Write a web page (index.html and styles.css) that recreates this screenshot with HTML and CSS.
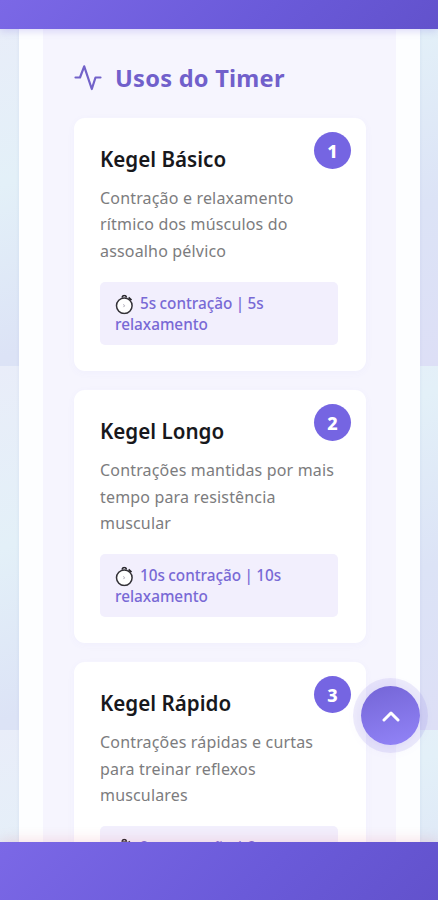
FILE: index.html
```html
<!DOCTYPE html>
<html lang="pt-BR">
<head>
<meta charset="utf-8">
<meta name="viewport" content="width=device-width, initial-scale=1">
<title>Usos do Timer</title>
<link rel="stylesheet" href="styles.css">
</head>
<body>
<svg class="defs" width="0" height="0" aria-hidden="true">
  <symbol id="stopwatch" viewBox="0 0 18 20">
    <circle cx="9.3" cy="11.2" r="7.8" fill="#fff" stroke="#343238" stroke-width="1.5"/>
    <path d="M7.2 3.2Q7.4 1 9.3 1t2.1 2.2M13.6 3l2.9 2.6" fill="none" stroke="#29272d" stroke-width="1.7"/>
    <path d="M8.5 9.8l1 1.6-1 1.2" fill="none" stroke="#a9a6b4" stroke-width="1"/>
  </symbol>
</svg>
<header class="bar bar-top"></header>
<main class="page">
  <div class="sheet">
    <section class="panel">
      <h2 class="title">
        <svg class="pulse" viewBox="0 0 28 28" aria-hidden="true"><path d="M1.5 13.5H6L10.2 2.3l7.6 22.7L21.5 13.5h5"/></svg>
        <span>Usos do Timer</span>
      </h2>
      <div class="cards">
        <article class="card">
          <span class="badge">1</span>
          <h3>Kegel Básico</h3>
          <p class="desc">Contração e relaxamento<br>rítmico dos músculos do<br>assoalho pélvico</p>
          <p class="time"><svg class="watch" aria-hidden="true"><use href="#stopwatch"/></svg>5s contração | 5s<br>relaxamento</p>
        </article>
        <article class="card">
          <span class="badge">2</span>
          <h3>Kegel Longo</h3>
          <p class="desc">Contrações mantidas por mais<br>tempo para resistência<br>muscular</p>
          <p class="time"><svg class="watch" aria-hidden="true"><use href="#stopwatch"/></svg>10s contração | 10s<br>relaxamento</p>
        </article>
        <article class="card">
          <span class="badge">3</span>
          <h3>Kegel Rápido</h3>
          <p class="desc">Contrações rápidas e curtas<br>para treinar reflexos<br>musculares</p>
          <p class="time"><svg class="watch" aria-hidden="true"><use href="#stopwatch"/></svg>2s contração | 2s<br>relaxamento</p>
        </article>
      </div>
    </section>
  </div>
</main>
<footer class="bar bar-bottom"></footer>
<button class="to-top" aria-label="Voltar ao topo">
  <svg viewBox="0 0 18 12" aria-hidden="true"><path d="M2 10l7-7 7 7"/></svg>
</button>
</body>
</html>
```
FILE: styles.css
```css
* { box-sizing: border-box; }

body {
  margin: 0;
  height: 900px;
  overflow: hidden;
  display: flex;
  flex-direction: column;
  font-family: "Noto Sans", "Open Sans", sans-serif;
  background: linear-gradient(160deg, #e9edf9 0%, #e3f0f8 35%, #dce3f6 68%, #dddff6 100%) 0 2px / 438px 364px;
}

.defs { position: absolute; }

.bar {
  flex: none;
  position: relative;
  z-index: 2;
  background: linear-gradient(135deg, #7b68e6 0%, #6a5ad9 60%, #6252cc 100%);
}
.bar-top { height: 29px; box-shadow: 0 2px 8px rgba(108, 92, 220, .24); }
.bar-bottom { height: 58px; box-shadow: 0 -2px 12px rgba(220, 90, 110, .18); }

.page {
  height: 813px;
  overflow: hidden;
  padding: 0 19px;
}
.sheet {
  width: 401px;
  height: 813px;
  padding: 0 24px;
  background: #fdfeff;
  box-shadow: 0 0 3px rgba(140, 150, 205, .16);
}
.panel {
  width: 353px;
  height: 900px;
  padding: 33px 30px 0 31px;
  background: #f6f5fe;
}

.title {
  display: flex;
  align-items: center;
  gap: 13px;
  height: 32px;
  margin: 0 0 24px;
  color: #7160cb;
  font-size: 23.6px;
  font-weight: 700;
  letter-spacing: .25px;
  line-height: 32px;
  white-space: nowrap;
}
.pulse {
  width: 28px;
  height: 28px;
  fill: none;
  stroke: #7262c9;
  stroke-width: 2.2;
  stroke-linejoin: round;
  stroke-linecap: round;
}

.cards { display: grid; gap: 19.2px; }
.card {
  position: relative;
  width: 292px;
  height: 253px;
  padding: 26px 28px 26px 26px;
  border-radius: 11px;
  background: #fff;
  box-shadow: 0 2px 8px rgba(110, 92, 220, .04);
}
.card h3 {
  margin: 0;
  color: #18181c;
  font-size: 20.6px;
  font-weight: 600;
  line-height: 30px;
  white-space: nowrap;
}
.desc {
  margin: 11px 0 17.4px;
  color: #7c7c7e;
  font-size: 16px;
  letter-spacing: .17px;
  line-height: 26.4px;
  white-space: nowrap;
}
.time {
  height: 63px;
  margin: 0;
  padding: 11px 15px;
  border-radius: 5px;
  background: #f2effd;
  color: #7869d5;
  font-size: 15.3px;
  font-weight: 500;
  line-height: 21.6px;
  word-spacing: -.6px;
  white-space: nowrap;
}
.watch {
  width: 18px;
  height: 20px;
  margin: -4px 7px -4px 0;
  vertical-align: -3px;
  transform: translateY(-1.5px);
}
.badge {
  position: absolute;
  top: 14px;
  right: 15px;
  width: 37px;
  height: 37px;
  border-radius: 50%;
  background: #7565e2;
  color: #fff;
  font-size: 18px;
  font-weight: 800;
  line-height: 38px;
  text-align: center;
}

.to-top {
  position: absolute;
  z-index: 1;
  left: 361px;
  top: 686px;
  width: 59px;
  height: 59px;
  padding: 0;
  display: flex;
  align-items: center;
  justify-content: center;
  border: 0;
  border-radius: 50%;
  background: linear-gradient(165deg, #7465d6, #9284f8);
  box-shadow: 0 0 0 8px rgba(126, 108, 226, .13), 0 2px 14px rgba(126, 108, 226, .14);
}
.to-top svg {
  width: 18px;
  height: 12px;
  fill: none;
  stroke: #fff;
  stroke-width: 3;
  stroke-linecap: round;
  stroke-linejoin: round;
}
```
